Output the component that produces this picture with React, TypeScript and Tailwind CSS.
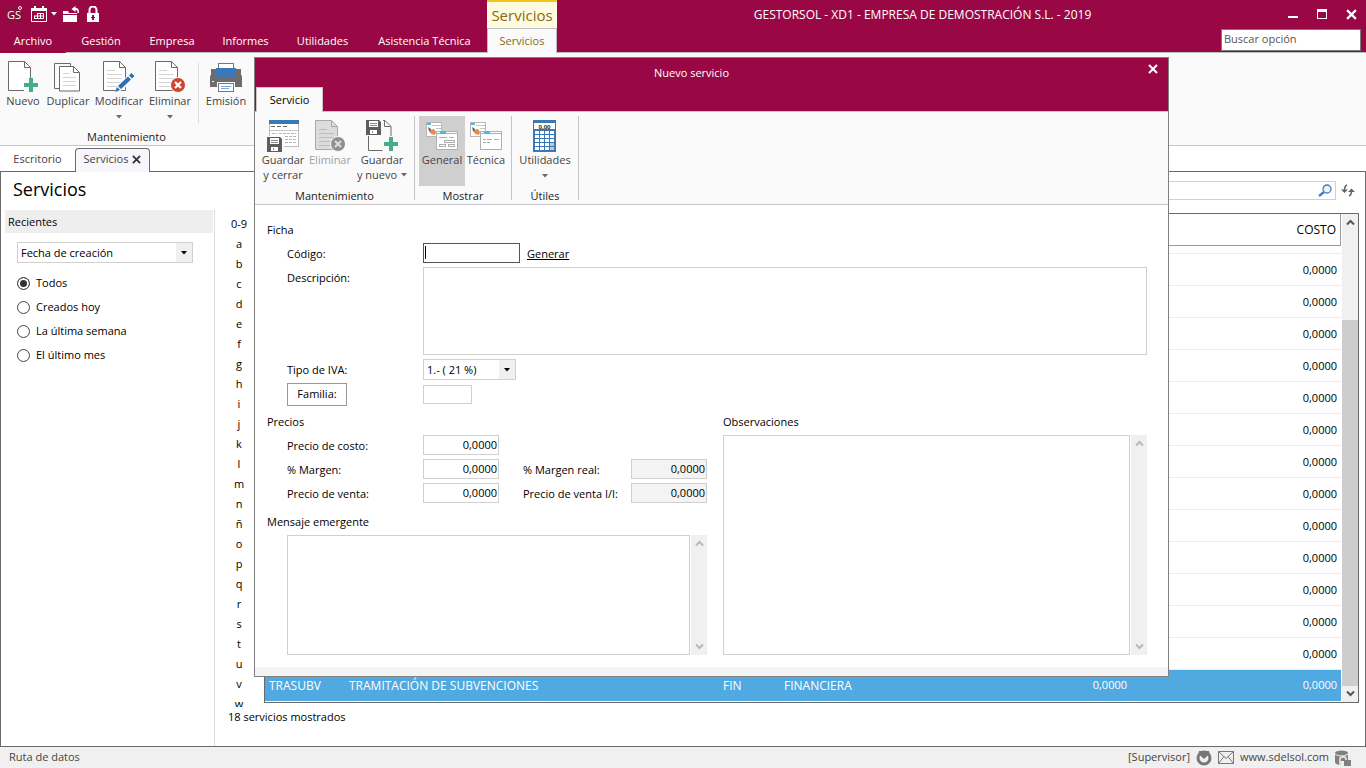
import type { ReactNode } from 'react';

const FONT = "font-['Open_Sans','Noto_Sans',sans-serif]";

/* ---------- small drawings ---------- */

function Sheet({ x = 0, y = 0, stroke = '#6a6a6a', fill = '#ffffff', lines = false }: { x?: number; y?: number; stroke?: string; fill?: string; lines?: boolean }) {
  return (
    <g transform={`translate(${x} ${y})`} fill="none" stroke={stroke}>
      <path d="M.5 .5h16l6 6v23H.5z" fill={fill} />
      <path d="M16.500 .5v6h6" />
      {lines && <path d="M4 9.500h8M4 13.500h15M4 17.500h15M4 21.500h15M4 25.500h13" stroke="#d4d4d4" />}
    </g>
  );
}

function Plus({ x, y }: { x: number; y: number }) {
  return <path transform={`translate(${x} ${y})`} d="M5 0h4v5h5v4H9v5H5V9H0V5h5z" fill="#45ad87" />;
}

function Floppy({ x, y }: { x: number; y: number }) {
  return (
    <g transform={`translate(${x} ${y})`}>
      <path d="M0 0h13l2 2v13H0z" fill="#5e5e5e" />
      <path d="M3 1h9v6H3zM4 10h7v4H4z" fill="#fff" />
      <path d="M4 3.500h7M4 5.500h7M6.500 11v2" stroke="#8a8a8a" fill="none" />
    </g>
  );
}

function NewIcon() {
  return (
    <svg width="32" height="32" viewBox="0 0 32 32">
      <Sheet x={1} />
      <path d="M17 17h15v15H17z" fill="#fafafa" />
      <Plus x={17} y={17} />
    </svg>
  );
}

function DuplicateIcon() {
  return (
    <svg width="32" height="32" viewBox="0 0 32 32">
      <path d="M9 27.500H2.500v-25h16v3" fill="none" stroke="#6a6a6a" />
      <path d="M7.500 5.500h14l6 6v18.500h-20z" fill="#fff" stroke="#6a6a6a" />
      <path d="M21.500 5.500v6h6" fill="none" stroke="#6a6a6a" />
      <path d="M11 12.500h7M11 16.500h13M11 20.500h13M11 24.500h13" stroke="#d4d4d4" />
    </svg>
  );
}

function EditIcon() {
  return (
    <svg width="32" height="32" viewBox="0 0 32 32">
      <Sheet lines />
      <path d="M13 31l2-6 12-11 4 3-12 11z" fill="#fafafa" stroke="#fafafa" strokeWidth="2" />
      <path d="M12 31l2-5 3 3z" fill="#2f6eb5" />
      <path d="M15 25l10-9.500 3 3-10 9.500zM26 14.500l2.500-2.500 3 3-2.500 2.500z" fill="#2f6eb5" />
    </svg>
  );
}

function DeleteIcon({ disabled = false }: { disabled?: boolean }) {
  return (
    <svg width="32" height="32" viewBox="0 0 32 32">
      <Sheet x={1} lines={!disabled} stroke={disabled ? '#a9a9a9' : '#6a6a6a'} fill={disabled ? '#dcdcdc' : '#fff'} />
      {disabled && <path d="M5 9.500h8M5 13.500h15M5 17.500h15M5 21.500h12M5 25.500h11" stroke="#bdbdbd" />}
      <circle cx="24" cy="24" r="7.500" fill={disabled ? '#8f8f8f' : '#cf4430'} stroke="#fafafa" />
      <path d="M21 21l6 6M27 21l-6 6" stroke={disabled ? '#dcdcdc' : '#fff'} strokeWidth="2.200" />
    </svg>
  );
}

function PrinterIcon() {
  return (
    <svg width="34" height="32" viewBox="0 0 34 32">
      <path d="M2 8h5v6h20V8h5v6l1 1v11h-7v-3H8v3H1V15l1-1z" fill="#6c6c6c" />
      <rect x="9.500" y="2.500" width="15" height="6" fill="#fff" stroke="#777" />
      <path d="M7 7h20v8l-1 1H8l-1-1z" fill="#3a78b8" />
      <path d="M3 20.500h2" stroke="#fff" />
      <rect x="8" y="21" width="18" height="7" fill="#fafafa" />
      <rect x="9.500" y="22.500" width="15" height="8" fill="#fff" stroke="#777" />
      <path d="M12 25.500h10M12 27.500h8" stroke="#7ba7d1" />
    </svg>
  );
}

function SaveCloseIcon() {
  return (
    <svg width="32" height="32" viewBox="0 0 32 32">
      <rect x="2.500" y=".5" width="29" height="26" fill="#fff" stroke="#bcbcbc" />
      <path d="M2 0h30v4H2z" fill="#3a78b8" />
      <path d="M4 6.500h4M10 6.500h4M16 6.500h4" stroke="#6a6a6a" />
      <path d="M3 10.500h28" stroke="#c4c4c4" />
      <path d="M5 13.500h5M12 13.500h17M18 16.500h11M18 19.500h11M18 22.500h11" stroke="#b4b4b4" strokeDasharray="3 1" />
      <rect x="-1" y="16" width="18" height="16" fill="#fafafa" />
      <Floppy x={0} y={17} />
    </svg>
  );
}

function SaveNewIcon() {
  return (
    <svg width="32" height="32" viewBox="0 0 32 32">
      <path d="M2.500 16v14.500h14M17 .5h2l6 6V16" fill="none" stroke="#6a6a6a" />
      <path d="M18.500 .5v6h6" fill="none" stroke="#6a6a6a" />
      <Floppy x={0} y={0} />
      <Plus x={18} y={17} />
    </svg>
  );
}

function FormsIcon({ detailed = false }: { detailed?: boolean }) {
  return (
    <svg width="32" height="32" viewBox="0 0 32 32">
      <rect x=".5" y="2.500" width="15" height="14" fill="#fff" stroke="#b6b6b6" />
      <path d="M1 3h4v2H1z" fill="#3dbdf2" />
      <path d="M6 5.500h9M10 8.500h5" stroke="#c3c3c3" />
      <path d="M2 7l3 2v4l-2-2z" fill="#5b6068" />
      <path d="M4 10l4-1 2 3-1 3-4-1z" fill="#e58c55" />
      <rect x="10.500" y="11.500" width="21" height="18" fill="#fff" stroke="#b0b0b0" />
      <path d="M11 13.500h20" stroke="#b0b0b0" />
      <path d="M14 11h6v3h-6z" fill="#3dbdf2" />
      {detailed ? (
        <g fill="none" stroke="#adadad">
          <path d="M13 17.500h8M23 17.500h5" />
          <rect x="18.500" y="20.500" width="10" height="2" />
          <rect x="13.500" y="24.500" width="6" height="2" />
          <rect x="22.500" y="24.500" width="6" height="2" />
        </g>
      ) : (
        <path d="M13 19.500h3M17 19.500h5M24 19.500h5M13 22.500h3M17 22.500h3" stroke="#adadad" />
      )}
    </svg>
  );
}

function CalculatorIcon() {
  const cols = [2, 7, 12, 17];
  const rows = [12, 16, 20, 24, 28];
  return (
    <svg width="24" height="32" viewBox="0 0 24 32" shapeRendering="crispEdges">
      <path d="M0 0h23v32H0z" fill="#3a78b8" />
      <path d="M1 3h21v6H1z" fill="#fff" />
      <text x="11.500" y="8.500" textAnchor="middle" fontSize="6" fontWeight="700" fill="#333" fontFamily="Open Sans, sans-serif">0,00</text>
      {rows.map((y) => cols.map((x) => <rect key={`${x}-${y}`} x={x} y={y - 1} width="4" height="3" fill={x === 17 && y > 20 ? '#c4c8cc' : '#fff'} />))}
    </svg>
  );
}

function CaretDown({ className }: { className?: string }) {
  return (
    <svg width="6" height="4" viewBox="0 0 6 4" className={className} aria-hidden="true">
      <path d="M0 0h6L3 3.500z" fill="currentColor" />
    </svg>
  );
}

function Cross({ size = 10, width = 2 }: { size?: number; width?: number }) {
  return (
    <svg width={size} height={size} viewBox="0 0 10 10" aria-hidden="true">
      <path d="M1 1l8 8M9 1l-8 8" stroke="currentColor" strokeWidth={width} />
    </svg>
  );
}

function Chevron({ up = false }: { up?: boolean }) {
  return (
    <svg width="9" height="7" viewBox="0 0 9 7" aria-hidden="true">
      <path d={up ? 'M1 5.500l3.500-3.500L8 5.500' : 'M1 1.500L4.500 5 8 1.500'} fill="none" stroke="currentColor" strokeWidth="2" />
    </svg>
  );
}

/* ---------- shared controls ---------- */

function RibbonButton({ icon, label, second, caret = false, active = false, disabled = false }: { icon: ReactNode; label: string; second?: string; caret?: boolean; active?: boolean; disabled?: boolean }) {
  return (
    <button
      type="button"
      disabled={disabled}
      className={`flex h-[70px] flex-col items-center pt-1 text-[11px] leading-[15px] whitespace-nowrap ${active ? 'bg-[#cfcfcf]' : ''} ${disabled ? 'text-[#a0a0a0]' : 'text-[#444]'}`}
    >
      {icon}
      <span>{label}</span>
      {second ? (
        <span className="flex items-center gap-1">
          {second}
          {caret && <CaretDown className="text-[#6a6a6a]" />}
        </span>
      ) : (
        caret && <CaretDown className="mt-[7px] text-[#6a6a6a]" />
      )}
    </button>
  );
}

function Select({ id, options, className }: { id: string; options: string[]; className: string }) {
  return (
    <div className={`relative h-[21px] ${className}`}>
      <select id={id} className="h-full w-full appearance-none border border-[#d0d0d0] bg-white pl-[3px] text-[11px] leading-[19px] text-black outline-none">
        {options.map((o) => (
          <option key={o}>{o}</option>
        ))}
      </select>
      <span className="pointer-events-none absolute inset-y-px right-px flex w-4 items-center justify-center bg-[#f0f0f0]">
        <CaretDown className="text-black" />
      </span>
    </div>
  );
}

function NumberField({ id, label, readOnly = false }: { id: string; label: string; readOnly?: boolean }) {
  return (
    <>
      <label htmlFor={id} className="pt-[3px]">{label}</label>
      <input
        id={id}
        defaultValue="0,0000"
        readOnly={readOnly}
        className={`h-5 w-[76px] border border-[#d0d0d0] pr-px pb-[2px] text-right text-[11px] outline-none ${readOnly ? 'bg-[#f3f3f3]' : 'bg-white'}`}
      />
    </>
  );
}

function Memo({ id, className }: { id: string; className: string }) {
  return (
    <div className={`flex gap-px ${className}`}>
      <textarea id={id} className="min-w-0 flex-1 resize-none border border-[#d0d0d0] bg-white outline-none" />
      <div className="flex w-4 flex-col items-center justify-between bg-[#f0f0f0] py-[5px] text-[#b8b8b8]">
        <Chevron up />
        <Chevron />
      </div>
    </div>
  );
}

/* ---------- main window ---------- */

const menus = ['Archivo', 'Gestión', 'Empresa', 'Informes', 'Utilidades', 'Asistencia Técnica'];

function TitleBar() {
  return (
    <header className="flex h-[53px] shrink-0 bg-[#990845] text-white">
      <div className="flex w-[487px] flex-col">
        <div className="flex h-7 items-center pl-[7px]">
          <svg width="16" height="18" viewBox="0 0 16 18" aria-hidden="true">
            <path d="M0 3h16v13H0z" fill="#86103f" />
            <text x="0" y="14" fontSize="11" fill="#fff" fontFamily="Open Sans, sans-serif">GS</text>
            <circle cx="13" cy="3" r="1.500" fill="none" stroke="#fff" />
          </svg>
          <svg width="16" height="16" viewBox="0 0 16 16" className="ml-2" aria-hidden="true">
            <path d="M.5 2.500h15v13H.5z" fill="none" stroke="#fff" />
            <path d="M0 2h16v3H0zM3 0h2v3H3zM11 0h2v3h-2z" fill="#fff" />
            <path d="M6.500 7.500h6v5M3.500 12.500h9M3.500 10v3M3 10h10M6.500 7v6M9.500 7v6" fill="none" stroke="#fff" />
          </svg>
          <CaretDown className="ml-1" />
          <svg width="17" height="17" viewBox="0 0 17 17" className="ml-[6px]" aria-hidden="true">
            <path d="M0 5h5l1 2h8v9H0z" fill="#fff" />
            <path d="M0 8.500h14" stroke="#990845" />
            <path d="M12.500 0L8.500 3l4 3V4c2 0 2 1 2 3h1.500c0-4-1-5-3.500-5z" fill="#fff" />
          </svg>
          <svg width="12" height="16" viewBox="0 0 12 16" className="ml-[7px]" aria-hidden="true">
            <path d="M2.500 8V4a3.500 3.500 0 0 1 7 0v4" fill="none" stroke="#fff" strokeWidth="2" />
            <path d="M0 7h12v9H0z" fill="#fff" />
            <path d="M5 9h2v2h1v1H7v2H5v-2H4v-1h1z" fill="#990845" />
          </svg>
        </div>
        <nav className="grid flex-1 grid-cols-[66px_70px_72px_75px_79px_1fr] text-[11px]">
          {menus.map((m) => (
            <a key={m} href="#" className="flex items-center justify-center border-b border-[#bdbdbd] pt-[2px] whitespace-nowrap first:border-transparent">
              {m}
            </a>
          ))}
        </nav>
      </div>
      <div className="flex w-[70px] flex-col text-center text-[#8a6914]">
        <div className="h-7 border-t-2 border-[#f5c518] bg-[#fffbe0] text-[15px] leading-[26px]">Servicios</div>
        <a href="#" className="block flex-1 border-x border-t border-[#bdbdbd] bg-[#fafafa] text-[11px] leading-6">Servicios</a>
      </div>
      <div className="flex min-w-0 flex-1 flex-col border-b border-[#bdbdbd]">
        <div className="flex h-[29px] items-center">
          <h1 className="flex-1 text-center text-[12px] whitespace-nowrap">GESTORSOL - XD1 - EMPRESA DE DEMOSTRACIÓN S.L. - 2019</h1>
          <div className="flex gap-[19px] pr-[9px]">
            <button type="button" aria-label="Minimizar" className="flex h-[11px] w-[10px] items-end pb-[2px]">
              <span className="h-[2px] w-full bg-white" />
            </button>
            <button type="button" aria-label="Maximizar" className="h-[10px] w-[10px] border border-t-[3px] border-white" />
            <button type="button" aria-label="Cerrar">
              <Cross size={11} />
            </button>
          </div>
        </div>
        <input
          aria-label="Buscar opción"
          placeholder="Buscar opción"
          className="mr-[5px] h-[22px] w-[140px] self-end border border-[#7b7b7b] bg-white pb-[3px] pl-[2px] text-[11px] text-black outline-none placeholder:text-[#555]"
        />
      </div>
    </header>
  );
}

function MainRibbon() {
  return (
    <section className="flex h-[93px] shrink-0 border-b border-[#c6c6c6] bg-[#fafafa] pt-1">
      <div className="flex flex-col">
        <div className="flex h-[70px]">
          <div className="grid grid-cols-[46px_44px_58px_44px]">
            <RibbonButton icon={<NewIcon />} label="Nuevo" />
            <RibbonButton icon={<DuplicateIcon />} label="Duplicar" />
            <RibbonButton icon={<EditIcon />} label="Modificar" caret />
            <RibbonButton icon={<DeleteIcon />} label="Eliminar" caret />
          </div>
          <div className="mt-[6px] ml-[6px] h-[60px] w-px bg-[#dcdcdc]" />
          <div className="grid w-[54px]">
            <RibbonButton icon={<PrinterIcon />} label="Emisión" />
          </div>
        </div>
        <div className="mt-px text-center text-[11px] leading-[18px] text-[#222]">Mantenimiento</div>
      </div>
    </section>
  );
}

function DocumentTabs() {
  return (
    <nav className="flex h-[26px] shrink-0 items-end text-[11px] text-[#444]">
      <a href="#" className="flex h-[26px] w-[75px] items-center justify-center border-b border-[#6a6a6a] pt-[2px]">Escritorio</a>
      <div className="flex h-6 w-[75px] items-center justify-center gap-1 rounded-t-[4px] border border-b-0 border-[#6a6a6a] bg-[#f6f6fc] pb-[2px]">
        <a href="#">Servicios</a>
        <button type="button" aria-label="Cerrar pestaña" className="text-[#333]">
          <Cross size={9} />
        </button>
      </div>
      <div className="h-full flex-1 border-b border-[#6a6a6a]" />
    </nav>
  );
}

const periods = ['Todos', 'Creados hoy', 'La última semana', 'El último mes'];

function Sidebar() {
  return (
    <aside className="flex w-[214px] flex-col text-[11px] text-black">
      <h2 className="h-[38px] pl-3 text-[18px] leading-[34px]">Servicios</h2>
      <div className="flex flex-1 flex-col border-r border-[#dcdcdc] pl-1">
        <h3 className="mr-px h-[23px] bg-[#eee] pl-[3px] leading-[24px]">
          <label htmlFor="recientes">Recientes</label>
        </h3>
        <Select id="recientes" options={['Fecha de creación']} className="mt-[9px] ml-3 w-44" />
        <fieldset className="mt-2 ml-3">
          {periods.map((p, i) => (
            <label key={p} className="flex h-6 items-center gap-[6px]">
              <input
                type="radio"
                name="periodo"
                defaultChecked={i === 0}
                className="h-[13px] w-[13px] appearance-none rounded-full border border-[#444] bg-white checked:bg-[#333] checked:shadow-[inset_0_0_0_2px_#fff]"
              />
              {p}
            </label>
          ))}
        </fieldset>
      </div>
    </aside>
  );
}

const letters = ['0-9', ...'abcdefghijklmn', 'ñ', ...'opqrstuvw'];
const costs = Array.from({ length: 13 }, () => '0,0000');

function ServiceTable() {
  return (
    <div className="flex min-h-0 flex-1 border border-[#6a6a6a] bg-white">
      <div className="flex min-w-0 flex-1 flex-col justify-end overflow-hidden">
        <table className="w-full table-fixed border-separate border-spacing-0 text-[11px] text-black">
          <colgroup>
            <col className="w-20" />
            <col className="w-[374px]" />
            <col className="w-[61px]" />
            <col />
            <col className="w-[150px]" />
            <col className="w-[210px]" />
          </colgroup>
          <thead>
            <tr className="h-8">
              <th colSpan={5} className="border-b border-[#9a9a9a]" />
              <th className="border-r border-b border-[#9a9a9a] pr-1 text-right text-[12px] font-normal">COSTO</th>
            </tr>
          </thead>
          <tbody>
            <tr className="h-2">
              <td colSpan={6} className="border-b border-[#ececec] p-0" />
            </tr>
            {costs.map((c, i) => (
              <tr key={i} className="h-8">
                <td colSpan={5} className="border-b border-[#ececec]" />
                <td className="border-b border-[#ececec] pt-[2px] pr-1 text-right">{c}</td>
              </tr>
            ))}
            <tr className="h-[31px] bg-[#50a9e0] text-white">
              <td className="pl-1 text-[12px]">TRASUBV</td>
              <td className="pl-1 text-[12px]">TRAMITACIÓN DE SUBVENCIONES</td>
              <td className="pl-1 text-[12px]">FIN</td>
              <td className="pl-1 text-[12px]">FINANCIERA</td>
              <td className="pr-1 text-right">0,0000</td>
              <td className="pr-1 text-right">0,0000</td>
            </tr>
          </tbody>
        </table>
        <div className="h-px shrink-0" />
      </div>
      <div className="ml-px flex w-4 flex-col items-center bg-[#f0f0f0] pt-[5px] text-[#555]">
        <Chevron up />
        <div className="mt-[94px] w-full flex-1 bg-[#cdcdcd]" />
        <div className="pt-1 pb-[5px]">
          <Chevron />
        </div>
      </div>
    </div>
  );
}

function Workspace() {
  return (
    <main className="flex min-h-0 flex-1 border-x border-b border-[#6a6a6a] bg-white">
      <Sidebar />
      <div className="flex min-w-0 flex-1 flex-col pl-[9px]">
        <div className="flex h-[41px] shrink-0 items-center justify-end gap-[5px] pr-[10px] pb-[5px] pl-10">
          <label className="flex h-[19px] flex-1 items-center border border-[#d0d0d0] pr-[3px]">
            <input type="search" aria-label="Buscar servicio" className="min-w-0 flex-1 outline-none" />
            <svg width="14" height="13" viewBox="0 0 14 13" aria-hidden="true">
              <circle cx="9" cy="5" r="4" fill="#eef4fb" stroke="#3f7fc4" strokeWidth="1.300" />
              <path d="M6 8l-5 4" stroke="#3f7fc4" strokeWidth="2.500" />
            </svg>
          </label>
          <button type="button" aria-label="Actualizar">
            <svg width="14" height="13" viewBox="0 0 14 13" aria-hidden="true">
              <path d="M6 1C4 1.500 3.500 3 3.500 6.500M8 12c2-.5 2.500-2 2.500-5.500" fill="none" stroke="#666" strokeWidth="1.600" />
              <path d="M0 5.500h7L3.500 9zM7 8h7l-3.500-3.500z" fill="#666" />
            </svg>
          </button>
        </div>
        <div className="flex min-h-0 flex-1 pr-[6px]">
          <ul className="mt-px mb-[-4px] w-10 shrink-0 overflow-hidden pr-[10px] text-center text-[11px] leading-5 whitespace-nowrap text-black">
            {letters.map((l) => (
              <li key={l}>{l}</li>
            ))}
          </ul>
          <ServiceTable />
        </div>
        <p className="h-[43px] shrink-0 pl-1 text-[11px] leading-[28px] text-black">18 servicios mostrados</p>
      </div>
    </main>
  );
}

function StatusBar() {
  return (
    <footer className="flex h-[21px] shrink-0 items-center bg-[#f0f0f0] pr-[15px] pl-[9px] text-[11px] text-[#444]">
      <span className="flex-1">Ruta de datos</span>
      <span>[Supervisor]</span>
      <svg width="16" height="16" viewBox="0 0 16 16" className="ml-[6px]" aria-hidden="true">
        <circle cx="8" cy="8" r="6" fill="none" stroke="#767676" strokeWidth="3" />
        <path d="M3.500 2.500L8 7l4.500-4.500" fill="none" stroke="#f0f0f0" strokeWidth="3" />
        <path d="M3 1h10l.5 3L8 9 2.500 4z" fill="#767676" />
      </svg>
      <svg width="16" height="13" viewBox="0 0 16 13" className="ml-[6px]" aria-hidden="true">
        <path d="M.5 .5h15v12H.5zM.5 .5L8 7.500l7.500-7M.5 12.500l5.500-7M15.500 12.500l-5.500-7" fill="none" stroke="#777" />
      </svg>
      <a href="#" className="ml-[6px]">www.sdelsol.com</a>
      <svg width="16" height="16" viewBox="0 0 16 16" className="ml-[6px]" aria-hidden="true">
        <path d="M0 3v9c0 2 3 3 6 3V3z" fill="#808080" />
        <path d="M0 5h13v6H0z" fill="#808080" />
        <ellipse cx="6.500" cy="3" rx="6.500" ry="2.500" fill="#808080" />
        <path d="M0 4c2 2.500 11 2.500 13 0" fill="none" stroke="#f0f0f0" />
        <path d="M5 15V9c0-3 6-3 6 0v1" fill="none" stroke="#f0f0f0" strokeWidth="1.500" />
        <path d="M9 10h7v6H9z" fill="#808080" />
      </svg>
    </footer>
  );
}

/* ---------- dialog ---------- */

function DialogGroup({ title, className, children }: { title: string; className: string; children: ReactNode }) {
  return (
    <div className={`flex flex-col border-r border-[#c6c6c6] ${className}`}>
      {children}
      <div className="mt-[2px] text-center text-[11px] leading-[16px] text-[#222]">{title}</div>
    </div>
  );
}

function ServiceDialog() {
  return (
    <div role="dialog" aria-labelledby="dialog-title" className="absolute top-[57px] right-[197px] left-[254px] border border-[#808080] bg-white text-[11px] text-black">
      <div className="relative flex h-[54px] flex-col justify-between border-b border-[#c6c6c6] bg-[#990845]">
        <h2 id="dialog-title" className="pr-10 text-center leading-[29px] text-white">Nuevo servicio</h2>
        <button type="button" aria-label="Cerrar" className="absolute top-[6px] right-[10px] text-white">
          <Cross size={10} />
        </button>
        <a href="#" className="-mb-px ml-px flex h-[25px] w-[67px] items-center justify-center border border-b-0 border-[#d8c0ca] bg-[#fafafa]">Servicio</a>
      </div>
      <div className="flex h-[93px] border-b border-[#c6c6c6] bg-[#fafafa] pt-1 pb-1">
        <DialogGroup title="Mantenimiento" className="w-40 px-1">
          <div className="grid grid-cols-[48px_46px_58px]">
            <RibbonButton icon={<SaveCloseIcon />} label="Guardar" second="y cerrar" />
            <RibbonButton icon={<DeleteIcon disabled />} label="Eliminar" disabled />
            <RibbonButton icon={<SaveNewIcon />} label="Guardar" second="y nuevo" caret />
          </div>
        </DialogGroup>
        <DialogGroup title="Mostrar" className="w-[97px] px-1">
          <div className="grid grid-cols-[46px_42px]">
            <RibbonButton icon={<FormsIcon detailed />} label="General" active />
            <RibbonButton icon={<FormsIcon />} label="Técnica" />
          </div>
        </DialogGroup>
        <DialogGroup title="Útiles" className="w-[67px]">
          <div className="grid">
            <RibbonButton icon={<CalculatorIcon />} label="Utilidades" caret />
          </div>
        </DialogGroup>
      </div>

      <form className="px-3 pr-[21px] pt-4 pb-3">
        <h3 className="leading-[18px]">Ficha</h3>
        <div className="mt-[4px] grid grid-cols-[136px_1fr] gap-y-1 pl-5">
          <label htmlFor="codigo" className="pt-[3px]">Código:</label>
          <div className="flex items-center gap-[7px]">
            <span className="relative">
              <input id="codigo" className="block h-5 w-[97px] border border-[#555] bg-white outline-none" />
              <span className="absolute top-[3px] left-[2px] h-[13px] w-px bg-black" />
            </span>
            <a href="#" className="pt-[2px] underline">Generar</a>
          </div>
          <label htmlFor="descripcion" className="pt-[3px]">Descripción:</label>
          <textarea id="descripcion" className="block h-[88px] w-full resize-none border border-[#d0d0d0] bg-white outline-none" />
          <label htmlFor="iva" className="pt-[3px]">Tipo de IVA:</label>
          <Select id="iva" options={['1.- ( 21 %)']} className="w-[93px]" />
          <button type="button" className="-mt-px h-[23px] w-[60px] border border-[#999] bg-white">Familia:</button>
          <input aria-label="Familia" className="mt-px h-[19px] w-[49px] border border-[#d0d0d0] bg-white outline-none" />
        </div>

        <div className="mt-[7px] grid grid-cols-[440px_1fr] gap-x-4">
          <div>
            <h3 className="leading-[18px]">Precios</h3>
            <div className="mt-1 flex items-end justify-between pl-5">
              <div className="grid grid-cols-[136px_76px] gap-y-1">
                <NumberField id="costo" label="Precio de costo:" />
                <NumberField id="margen" label="% Margen:" />
                <NumberField id="venta" label="Precio de venta:" />
              </div>
              <div className="grid grid-cols-[108px_76px] gap-y-1">
                <NumberField id="margen-real" label="% Margen real:" readOnly />
                <NumberField id="venta-ii" label="Precio de venta I/I:" readOnly />
              </div>
            </div>
            <h3 className="mt-[10px] leading-[18px]">
              <label htmlFor="mensaje">Mensaje emergente</label>
            </h3>
            <Memo id="mensaje" className="mt-1 ml-5 h-[120px]" />
          </div>
          <div className="flex flex-col">
            <h3 className="leading-[18px]">
              <label htmlFor="observaciones">Observaciones</label>
            </h3>
            <Memo id="observaciones" className="mt-1 flex-1" />
          </div>
        </div>
      </form>
      <div className="h-[9px] bg-[#f3f3f3]" />
    </div>
  );
}

export default function App() {
  return (
    <div className={`relative flex h-screen flex-col bg-white ${FONT}`}>
      <TitleBar />
      <MainRibbon />
      <DocumentTabs />
      <Workspace />
      <StatusBar />
      <ServiceDialog />
    </div>
  );
}
